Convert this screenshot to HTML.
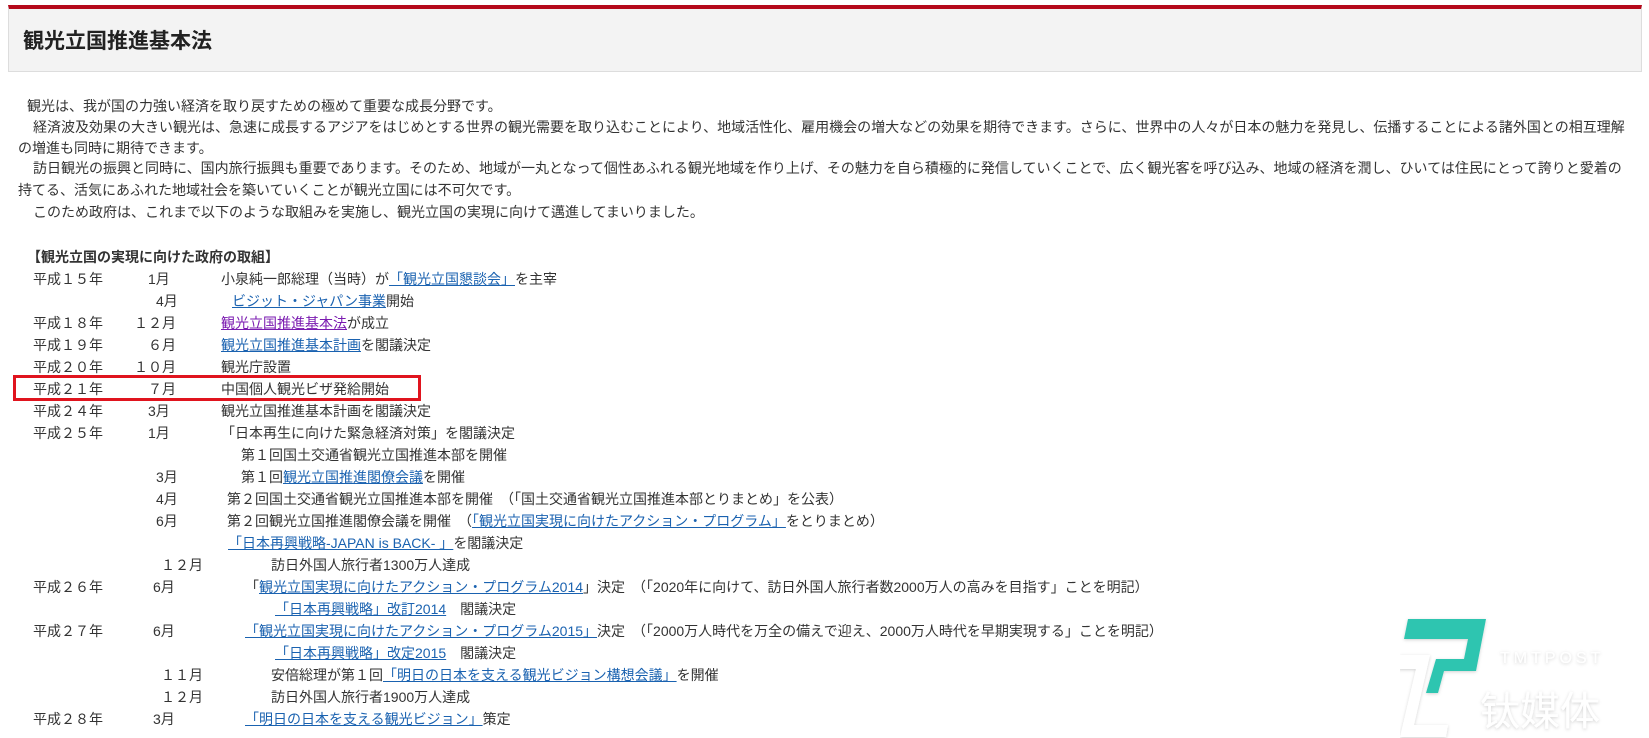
<!DOCTYPE html>
<html><head><meta charset="utf-8">
<style>
html,body{margin:0;padding:0;background:#fff;width:1649px;height:738px;overflow:hidden;position:relative}
body{font-family:"Liberation Sans","Noto Sans CJK JP",sans-serif;font-size:14px;color:#333}
.hd{position:absolute;left:8px;top:5px;width:1634px;height:67px;background:#f3f3f3;border-top:4px solid #b5091b;border-left:1px solid #ddd;border-right:1px solid #ddd;border-bottom:1px solid #ddd;box-sizing:border-box}
.hd h1{margin:0;position:absolute;left:14px;top:20px;font-size:21px;font-weight:bold;color:#222;line-height:26px}
.l{position:absolute;white-space:nowrap;line-height:22px}
a{color:#1a62b0;text-decoration:underline}
a.v{color:#7a1ab0}
.box{position:absolute;left:13px;top:375px;width:408px;height:26px;border:3px solid #e0141e;box-sizing:border-box}
</style></head><body>
<div class="hd"><h1>観光立国推進基本法</h1></div>

<div class="l" style="left:27px;top:95px">観光は、我が国の力強い経済を取り戻すための極めて重要な成長分野です。</div>
<div class="l" style="left:33px;top:116px">経済波及効果の大きい観光は、急速に成長するアジアをはじめとする世界の観光需要を取り込むことにより、地域活性化、雇用機会の増大などの効果を期待できます。さらに、世界中の人々が日本の魅力を発見し、伝播することによる諸外国との相互理解</div>
<div class="l" style="left:18px;top:137px">の増進も同時に期待できます。</div>
<div class="l" style="left:33px;top:157px">訪日観光の振興と同時に、国内旅行振興も重要であります。そのため、地域が一丸となって個性あふれる観光地域を作り上げ、その魅力を自ら積極的に発信していくことで、広く観光客を呼び込み、地域の経済を潤し、ひいては住民にとって誇りと愛着の</div>
<div class="l" style="left:18px;top:179px">持てる、活気にあふれた地域社会を築いていくことが観光立国には不可欠です。</div>
<div class="l" style="left:33px;top:201px">このため政府は、これまで以下のような取組みを実施し、観光立国の実現に向けて邁進してまいりました。</div>

<div class="l" style="left:27px;top:246px;font-weight:bold">【観光立国の実現に向けた政府の取組】</div>

<div class="l" style="left:33px;top:268px">平成１５年</div><div class="l" style="left:148px;top:268px">1月</div><div class="l" style="left:221px;top:268px">小泉純一郎総理（当時）が<a>「観光立国懇談会」</a>を主宰</div>
<div class="l" style="left:156px;top:290px">4月</div><div class="l" style="left:232px;top:290px"><a>ビジット・ジャパン事業</a>開始</div>
<div class="l" style="left:33px;top:312px">平成１８年</div><div class="l" style="left:134px;top:312px">１２月</div><div class="l" style="left:221px;top:312px"><a class="v">観光立国推進基本法</a>が成立</div>
<div class="l" style="left:33px;top:334px">平成１９年</div><div class="l" style="left:148px;top:334px">６月</div><div class="l" style="left:221px;top:334px"><a>観光立国推進基本計画</a>を閣議決定</div>
<div class="l" style="left:33px;top:356px">平成２０年</div><div class="l" style="left:134px;top:356px">１０月</div><div class="l" style="left:221px;top:356px">観光庁設置</div>
<div class="l" style="left:33px;top:378px">平成２１年</div><div class="l" style="left:148px;top:378px">７月</div><div class="l" style="left:221px;top:378px">中国個人観光ビザ発給開始</div>
<div class="box"></div>
<div class="l" style="left:33px;top:400px">平成２４年</div><div class="l" style="left:148px;top:400px">3月</div><div class="l" style="left:221px;top:400px">観光立国推進基本計画を閣議決定</div>
<div class="l" style="left:33px;top:422px">平成２５年</div><div class="l" style="left:148px;top:422px">1月</div><div class="l" style="left:221px;top:422px">「日本再生に向けた緊急経済対策」を閣議決定</div>
<div class="l" style="left:241px;top:444px">第１回国土交通省観光立国推進本部を開催</div>
<div class="l" style="left:156px;top:466px">3月</div><div class="l" style="left:241px;top:466px">第１回<a>観光立国推進閣僚会議</a>を開催</div>
<div class="l" style="left:156px;top:488px">4月</div><div class="l" style="left:227px;top:488px">第２回国土交通省観光立国推進本部を開催　（「国土交通省観光立国推進本部とりまとめ」を公表）</div>
<div class="l" style="left:156px;top:510px">6月</div><div class="l" style="left:227px;top:510px">第２回観光立国推進閣僚会議を開催　（<a>「観光立国実現に向けたアクション・プログラム」</a>をとりまとめ）</div>
<div class="l" style="left:228px;top:532px"><a>「日本再興戦略-JAPAN is BACK- 」</a>を閣議決定</div>
<div class="l" style="left:161px;top:554px">１２月</div><div class="l" style="left:271px;top:554px">訪日外国人旅行者1300万人達成</div>
<div class="l" style="left:33px;top:576px">平成２６年</div><div class="l" style="left:153px;top:576px">6月</div><div class="l" style="left:245px;top:576px">「<a>観光立国実現に向けたアクション・プログラム2014</a>」決定　（「2020年に向けて、訪日外国人旅行者数2000万人の高みを目指す」ことを明記）</div>
<div class="l" style="left:275px;top:598px"><a>「日本再興戦略」改訂2014</a>　閣議決定</div>
<div class="l" style="left:33px;top:620px">平成２７年</div><div class="l" style="left:153px;top:620px">6月</div><div class="l" style="left:245px;top:620px"><a>「観光立国実現に向けたアクション・プログラム2015」</a>決定　（「2000万人時代を万全の備えで迎え、2000万人時代を早期実現する」ことを明記）</div>
<div class="l" style="left:275px;top:642px"><a>「日本再興戦略」改定2015</a>　閣議決定</div>
<div class="l" style="left:161px;top:664px">１１月</div><div class="l" style="left:271px;top:664px">安倍総理が第１回<a>「明日の日本を支える観光ビジョン構想会議」</a>を開催</div>
<div class="l" style="left:161px;top:686px">１２月</div><div class="l" style="left:271px;top:686px">訪日外国人旅行者1900万人達成</div>
<div class="l" style="left:33px;top:708px">平成２８年</div><div class="l" style="left:153px;top:708px">3月</div><div class="l" style="left:245px;top:708px"><a>「明日の日本を支える観光ビジョン」</a>策定</div>

<svg style="position:absolute;left:1400px;top:615px" width="240" height="123" viewBox="0 0 240 123">
<defs><filter id="s"><feDropShadow dx="0" dy="1" stdDeviation="1.5" flood-color="#000" flood-opacity="0.18"/></filter></defs>
<g filter="url(#s)">
<polygon points="8,4 86,4 76,56 44,56 38,78 26,78 36,44 64,44 68,24 4,24" fill="#2ec5b0"/>
<polygon points="0,40 30,40 14,110 48,110 46,122 0,122 16,54 -2,54" fill="#fff"/>
<text x="100" y="48" font-family="Liberation Sans" font-size="16" letter-spacing="4" fill="#fff">TMTPOST</text>
<text x="80" y="110" font-family="Noto Sans CJK SC" font-size="40" fill="#fff">钛媒体</text>
</g>
</svg>
</body></html>
